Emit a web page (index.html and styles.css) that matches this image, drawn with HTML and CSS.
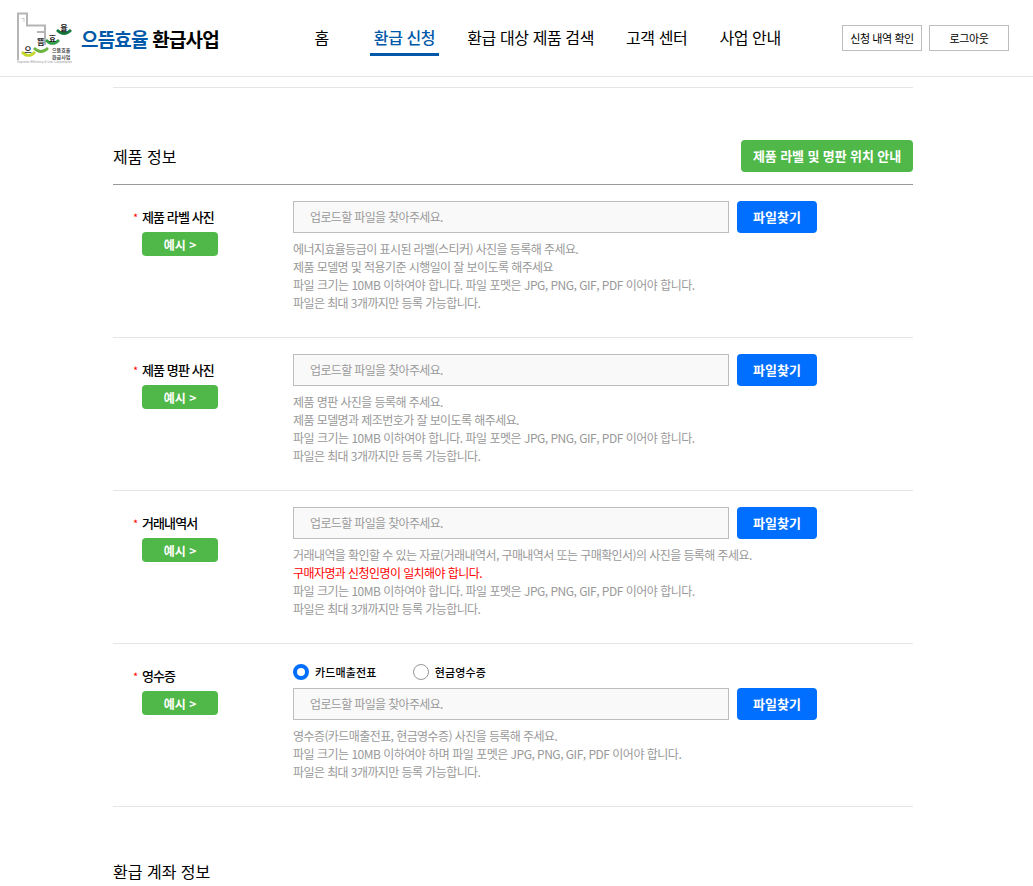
FILE: index.html
```html
<!DOCTYPE html>
<html lang="ko">
<head>
  <meta charset="UTF-8">
  <meta name="viewport" content="width=device-width, initial-scale=1.0">
  <title>으뜸효율 환급사업</title>
  <link rel="stylesheet" href="styles.css">
</head>
<body>
<header class="site-header">
  <a class="logo" href="#">
    <svg class="logo-mark" width="56" height="52" viewBox="0 0 56 52">
      <path d="M2 48V1.500H11V13.500H29V20H21M29 20V27H21M29 27V33" fill="none" stroke="#b5b5b5" stroke-width="2"/>
      <path d="M5.500 6.500H8V10" fill="none" stroke="#c8c8c8" stroke-width="1"/>
      <path d="M6 40Q12.500 47 19 40" fill="none" stroke="#c5d92d" stroke-width="2.600"/>
      <path d="M18 36Q25 43 32 36" fill="none" stroke="#6cb33f" stroke-width="2.600"/>
      <path d="M30 28Q36.500 35 43 28" fill="none" stroke="#2f9e44" stroke-width="2.600"/>
      <path d="M41 18Q48 25 55 18" fill="none" stroke="#157a3c" stroke-width="2.600"/>
      <text class="logo-big" x="12" y="41" text-anchor="middle">으</text>
      <text class="logo-big" x="25" y="33" text-anchor="middle">뜸</text>
      <text class="logo-big" x="36.500" y="30" text-anchor="middle">효</text>
      <text class="logo-big" x="48" y="19" text-anchor="middle">율</text>
      <text class="logo-small" x="36" y="40">으뜸효율</text>
      <text class="logo-small" x="36" y="46.500">환급사업</text>
      <text class="logo-tiny" x="1" y="50.500">Supreme Efficiency &amp; Low Consumption</text>
    </svg>
    <span class="logo-text"><em>으뜸효율</em> 환급사업</span>
  </a>
  <nav class="main-nav">
    <a class="nav-home" href="#">홈</a>
    <a class="active" href="#">환급 신청</a>
    <a href="#">환급 대상 제품 검색</a>
    <a href="#">고객 센터</a>
    <a href="#">사업 안내</a>
  </nav>
  <div class="header-btns">
    <a href="#">신청 내역 확인</a>
    <a href="#">로그아웃</a>
  </div>
</header>

<main class="container">
  <div class="top-line"></div>

  <div class="section-head">
    <h2>제품 정보</h2>
    <a class="btn-green btn-guide" href="#">제품 라벨 및 명판 위치 안내</a>
  </div>

  <!-- 제품 라벨 -->
  <div class="form-row">
    <div class="row-label">
      <p><span class="star">*</span>제품 라벨 사진</p>
      <a class="btn-green btn-example" href="#">예시 &gt;</a>
    </div>
    <div class="row-body">
      <div class="file-line">
        <div class="file-input">업로드할 파일을 찾아주세요.</div>
        <a class="btn-file" href="#">파일찾기</a>
      </div>
      <ul class="help">
        <li>에너지효율등급이 표시된 라벨(스티커) 사진을 등록해 주세요.</li>
        <li>제품 모델명 및 적용기준 시행일이 잘 보이도록 해주세요</li>
        <li class="spec">파일 크기는 10MB 이하여야 합니다. 파일 포멧은 JPG, PNG, GIF, PDF 이어야 합니다.</li>
        <li>파일은 최대 3개까지만 등록 가능합니다.</li>
      </ul>
    </div>
  </div>

  <!-- 제품 명판 -->
  <div class="form-row">
    <div class="row-label">
      <p><span class="star">*</span>제품 명판 사진</p>
      <a class="btn-green btn-example" href="#">예시 &gt;</a>
    </div>
    <div class="row-body">
      <div class="file-line">
        <div class="file-input">업로드할 파일을 찾아주세요.</div>
        <a class="btn-file" href="#">파일찾기</a>
      </div>
      <ul class="help">
        <li>제품 명판 사진을 등록해 주세요.</li>
        <li>제품 모델명과 제조번호가 잘 보이도록 해주세요.</li>
        <li class="spec">파일 크기는 10MB 이하여야 합니다. 파일 포멧은 JPG, PNG, GIF, PDF 이어야 합니다.</li>
        <li>파일은 최대 3개까지만 등록 가능합니다.</li>
      </ul>
    </div>
  </div>

  <!-- 거래내역서 -->
  <div class="form-row">
    <div class="row-label">
      <p><span class="star">*</span>거래내역서</p>
      <a class="btn-green btn-example" href="#">예시 &gt;</a>
    </div>
    <div class="row-body">
      <div class="file-line">
        <div class="file-input">업로드할 파일을 찾아주세요.</div>
        <a class="btn-file" href="#">파일찾기</a>
      </div>
      <ul class="help">
        <li>거래내역을 확인할 수 있는 자료(거래내역서, 구매내역서 또는 구매확인서)의 사진을 등록해 주세요.</li>
        <li class="warn">구매자명과 신청인명이 일치해야 합니다.</li>
        <li class="spec">파일 크기는 10MB 이하여야 합니다. 파일 포멧은 JPG, PNG, GIF, PDF 이어야 합니다.</li>
        <li>파일은 최대 3개까지만 등록 가능합니다.</li>
      </ul>
    </div>
  </div>

  <!-- 영수증 -->
  <div class="form-row">
    <div class="row-label">
      <p><span class="star">*</span>영수증</p>
      <a class="btn-green btn-example" href="#">예시 &gt;</a>
    </div>
    <div class="row-body">
      <div class="radio-line">
        <label class="radio"><span class="dot checked"></span>카드매출전표</label>
        <label class="radio"><span class="dot"></span>현금영수증</label>
      </div>
      <div class="file-line">
        <div class="file-input">업로드할 파일을 찾아주세요.</div>
        <a class="btn-file" href="#">파일찾기</a>
      </div>
      <ul class="help">
        <li>영수증(카드매출전표, 현금영수증) 사진을 등록해 주세요.</li>
        <li class="spec">파일 크기는 10MB 이하여야 하며 파일 포멧은 JPG, PNG, GIF, PDF 이어야 합니다.</li>
        <li>파일은 최대 3개까지만 등록 가능합니다.</li>
      </ul>
    </div>
  </div>

  <h2 class="next-title">환급 계좌 정보</h2>
</main>
</body>
</html>
```

FILE: styles.css
```css
/* General Styles */
* {
  box-sizing: border-box;
}
body {
  font-family: "Noto Sans CJK KR", "Noto Sans", sans-serif;
  margin: 0;
  padding: 0;
  background: #fff;
  color: #000;
}
a {
  color: inherit;
  text-decoration: none;
}
/* Header */
.site-header {
  display: flex;
  align-items: center;
  height: 77px;
  padding: 0 24px 0 16px;
  border-bottom: 1px solid #e5e5e5;
}
.logo {
  display: flex;
  align-items: center;
  width: 294.5px;
  gap: 9px;
}
.logo-mark {
  flex: none;
}
.logo-big {
  font-size: 8px;
  font-weight: 700;
  fill: #222;
}
.logo-small {
  font-size: 5px;
  font-weight: 500;
  fill: #333;
}
.logo-tiny {
  font-family: "Liberation Sans", sans-serif;
  font-size: 3.1px;
  fill: #999;
}
.logo-text {
  font-size: 19px;
  font-weight: 700;
  letter-spacing: -0.8px;
  white-space: nowrap;
}
.logo-text em {
  font-style: normal;
  color: #0058a8;
}
.main-nav {
  display: flex;
  gap: 24px;
  font-size: 16px;
  font-weight: 400;
  letter-spacing: -0.4px;
  white-space: nowrap;
}
.main-nav a {
  padding: 1px 4px 4px;
  border-bottom: 3px solid transparent;
  line-height: 24px;
  margin-top: 4px;
}
.main-nav .nav-home {
  margin-right: 13px;
}
.main-nav .active {
  color: #0058a8;
  font-weight: 500;
  border-bottom-color: #0058a8;
}
.header-btns {
  display: flex;
  gap: 7px;
  margin-left: auto;
}
.header-btns a {
  width: 80px;
  height: 26px;
  border: 1px solid #bdbdbd;
  font-size: 11px;
  line-height: 24px;
  letter-spacing: -0.4px;
  text-align: center;
  white-space: nowrap;
}
/* Content */
.container {
  width: 800px;
  margin-left: 113px;
}
.top-line {
  height: 11px;
  border-bottom: 1px solid #e5e5e5;
}
.section-head {
  display: flex;
  justify-content: space-between;
  align-items: center;
  height: 97px;
  padding-top: 52px;
  padding-bottom: 12px;
  border-bottom: 1px solid #999;
}
h2 {
  margin: 0;
  font-size: 16px;
  font-weight: 400;
  line-height: 24px;
}
.btn-green {
  display: block;
  background: #4fb848;
  color: #fff;
  border-radius: 4px;
  font-weight: 700;
  text-align: center;
}
.btn-guide {
  width: 172px;
  height: 32px;
  font-size: 13px;
  letter-spacing: -0.1px;
  line-height: 32px;
}
.form-row {
  display: flex;
  padding: 16px 0 25px;
  border-bottom: 1px solid #e5e5e5;
}
.row-label {
  width: 180px;
  padding: 6px 0 0 20px;
}
.row-label p {
  margin: 0 0 5px;
  font-size: 13px;
  font-weight: 500;
  letter-spacing: -0.9px;
  line-height: 20px;
}
.star {
  display: inline-block;
  width: 9px;
  color: #f00;
  font-size: 11px;
  font-weight: 400;
}
.btn-example {
  width: 76px;
  height: 24px;
  margin-left: 9px;
  font-size: 12px;
  line-height: 25px;
}
.file-line {
  display: flex;
  gap: 8px;
}
.file-input {
  width: 436px;
  height: 32px;
  padding-left: 16px;
  border: 1px solid #bdbdbd;
  background: #f9f9f9;
  color: #999;
  font-size: 12px;
  letter-spacing: -0.65px;
  line-height: 30px;
}
.btn-file {
  width: 80px;
  height: 32px;
  background: #006fff;
  color: #fff;
  border-radius: 4px;
  font-size: 13px;
  font-weight: 700;
  line-height: 32px;
  text-align: center;
}
.help {
  list-style: none;
  margin: 7px 0 0;
  padding: 0;
  color: #999;
  font-size: 12px;
  letter-spacing: -0.58px;
  line-height: 18px;
}
.help .spec {
  letter-spacing: -0.5px;
}
.help .warn {
  color: #f00;
}
.radio-line {
  display: flex;
  gap: 36px;
  height: 28px;
  padding-top: 4px;
  align-items: flex-start;
}
.radio {
  display: flex;
  align-items: center;
  gap: 6px;
  font-size: 11px;
  font-weight: 500;
  letter-spacing: 0.15px;
  line-height: 16px;
}
.dot {
  width: 16px;
  height: 16px;
  border: 1px solid #999;
  border-radius: 50%;
  background: #fff;
}
.dot.checked {
  border: 4px solid #006fff;
}
.next-title {
  margin-top: 52px;
}
```
